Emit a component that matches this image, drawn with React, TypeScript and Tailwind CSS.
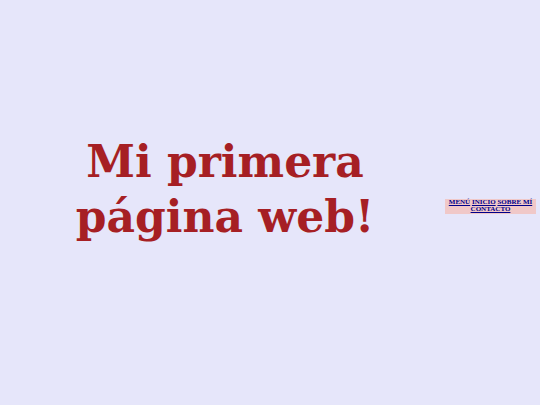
export default function App() {
  return (
    <div className="flex h-[405px] w-full items-center bg-[#e6e6fa] font-['Liberation_Serif',serif]">
      {/* Cabecera */}
      <h1 className="-mt-[28px] ml-[70px] w-[310px] text-center font-['DejaVu_Serif',serif] text-[44px] font-bold leading-[55px] text-[#a61f24]">
        Mi primera página web!
      </h1>
      <nav className="ml-auto mr-[4px] mt-[7px] w-[91px] bg-[#f0c8c8] text-center text-[7px] font-bold leading-[7.5px]">
        <a href="#" className="text-[#00008b] underline">MENÚ</a>{" "}
        <a href="#" className="text-[#00008b] underline">INICIO</a>{" "}
        <a href="#" className="text-[#00008b] underline">SOBRE MÍ</a>{" "}
        <a href="#" className="text-[#00008b] underline">CONTACTO</a>
      </nav>
    </div>
  );
}
